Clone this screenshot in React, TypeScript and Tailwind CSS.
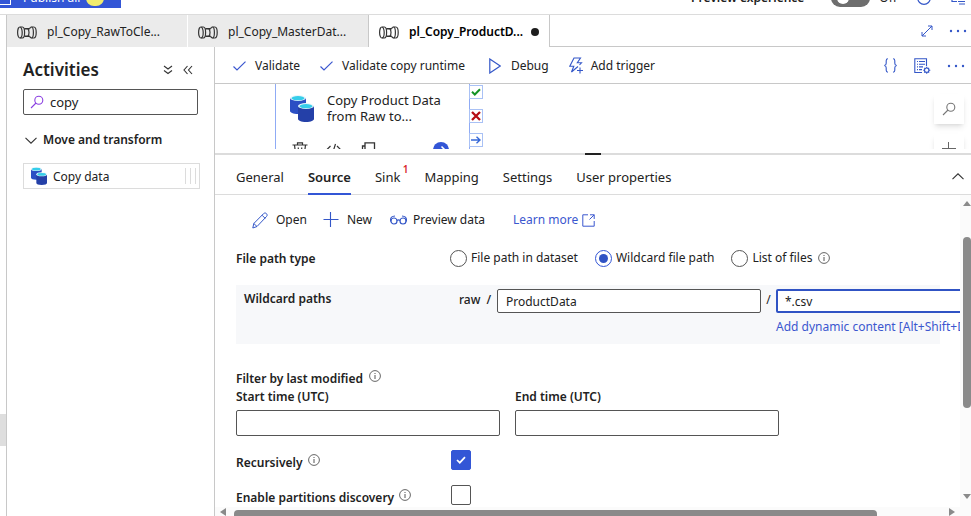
import { useState } from "react";
import type { ReactNode } from "react";

const font = "font-['Noto_Sans','Open_Sans',sans-serif]";

function PipelineIcon() {
  return (
    <svg width="20" height="13" viewBox="0 0 20 13" fill="none" stroke="#333" strokeWidth="1.2" className="shrink-0">
      <ellipse cx="2.900" cy="6.500" rx="2.300" ry="5.500" />
      <path d="M3.200 1h2.200c1.400 0 2.200 2.500 2.200 5.500S6.800 12 5.400 12H3.200" />
      <path d="M7.300 2.800h5.400M7.300 10.200h5.400" strokeWidth="1.400" />
      <path d="M11 2.800c.7 1 1 2.300 1 3.700s-.3 2.700-1 3.700" />
      <path d="M16.800 1h-2.200c-1.200 0-1.800 1-2 1.800M16.800 12h-2.200c-1.200 0-1.800-1-2-1.800" />
      <path d="M14.400 1c1.300 0 2 2.500 2 5.500s-.7 5.500-2 5.500M16.800 1c1.500 0 2.400 2.500 2.400 5.500S18.300 12 16.800 12" />
    </svg>
  );
}

function CopyDataIcon({ className }: { className: string }) {
  return (
    <svg viewBox="0 0 24 27" className={className}>
      <path d="M0 3v13c0 1.500 3 3 8 3s8-1.500 8-3V3z" fill="#2b4fc4" />
      <ellipse cx="8" cy="3" rx="8" ry="3" fill="#e8f6fb" />
      <ellipse cx="8" cy="3.200" rx="6.500" ry="2.100" fill="#35cdea" />
      <path d="M8 11v13c0 1.500 3 3 8 3s8-1.500 8-3V11z" fill="#2440a8" />
      <ellipse cx="16" cy="11" rx="8" ry="3" fill="#e8f6fb" />
      <ellipse cx="16" cy="11.200" rx="6.500" ry="2.100" fill="#35cdea" />
    </svg>
  );
}

function SearchIcon({ className }: { className: string }) {
  return (
    <svg viewBox="0 0 14 14" fill="none" stroke="currentColor" strokeWidth="1.100" className={className}>
      <circle cx="8.800" cy="5.200" r="4" />
      <path d="M6 8L1 13" />
    </svg>
  );
}

function CheckIcon() {
  return (
    <svg width="13" height="10" viewBox="0 0 13 10" fill="none" stroke="#3b57cf" strokeWidth="1.200">
      <path d="M.5 5.500L4 9 12.500.6" />
    </svg>
  );
}

function InfoIcon() {
  return (
    <svg width="12" height="12" viewBox="0 0 12 12" fill="none" stroke="#555" className="shrink-0">
      <circle cx="6" cy="6" r="5.400" strokeWidth=".9" />
      <path d="M6 5v4M6 3v1" strokeWidth="1" />
    </svg>
  );
}

function Dots() {
  return (
    <svg width="18" height="4" viewBox="0 0 18 4" fill="#3457c8">
      <circle cx="2" cy="2" r="1.200" />
      <circle cx="9" cy="2" r="1.200" />
      <circle cx="16" cy="2" r="1.200" />
    </svg>
  );
}

function TopBar() {
  return (
    <header className="flex h-[15px] shrink-0 items-end justify-between overflow-hidden border-b border-[#dcdcdc] bg-white">
      <button className="mb-[6px] flex h-5 w-[121px] shrink-0 items-center bg-[#3356d6] text-[12px] text-white">
        <span className="h-3.5 w-[11px] border border-l-0 border-white" />
        <span className="ml-3">Publish all</span>
        <span className="ml-1.5 h-4 w-[18px] rounded-full bg-[#f1ec6e]" />
      </button>
      <div className="mb-[6px] flex h-5 shrink-0 items-center pr-1.5 text-[12px] text-[#222]">
        <span className="font-semibold">Preview experience</span>
        <span className="ml-[27px] flex h-[18px] w-[39px] items-center rounded-full bg-[#6e6e6e] pl-1.5">
          <span className="size-3 rounded-full bg-white" />
        </span>
        <span className="ml-[9px]">Off</span>
        <svg width="14" height="14" viewBox="0 0 14 14" fill="none" stroke="#3457c8" className="ml-5">
          <circle cx="7" cy="7" r="6.300" strokeWidth="1.200" />
        </svg>
        <svg width="14" height="14" viewBox="0 0 14 14" fill="none" stroke="#3457c8" className="ml-5">
          <path d="M1 1v9.500h5M7 10.500h7M8 13h6" strokeWidth="1.200" />
        </svg>
      </div>
    </header>
  );
}

function FileTabs() {
  return (
    <div role="tablist" className="flex h-8 shrink-0 text-[12px] text-[#222]">
      <button role="tab" className="flex w-[181px] shrink-0 items-center gap-2.5 border-r border-white bg-[#ebebeb] pt-0.5 pl-2.5">
        <PipelineIcon />
        <span>pl_Copy_RawToCle...</span>
      </button>
      <button role="tab" className="flex w-[181px] shrink-0 items-center gap-2.5 border-r border-[#c8c8c8] bg-[#ebebeb] pt-0.5 pl-2.5">
        <PipelineIcon />
        <span>pl_Copy_MasterDat...</span>
      </button>
      <button role="tab" aria-selected="true" className="flex w-[181px] shrink-0 items-center gap-2.5 border-r border-[#c8c8c8] bg-white pt-0.5 pl-2.5 font-semibold text-black">
        <PipelineIcon />
        <span>pl_Copy_ProductD...</span>
        <span className="-ml-0.5 size-2 rounded-full bg-[#1d1d1d]" />
      </button>
      <div className="flex grow items-center justify-end gap-4 border-b border-[#c8c8c8] pr-1">
        <button aria-label="Expand">
          <svg width="12" height="12" viewBox="0 0 12 12" fill="none" stroke="#3457c8" strokeWidth="1">
            <path d="M1 11L11 1M7 1h4v4M1 7v4h4" />
          </svg>
        </button>
        <button aria-label="More tabs"><Dots /></button>
      </div>
    </div>
  );
}

function Activities() {
  const [query, setQuery] = useState("copy");
  return (
    <aside className="w-[208px] shrink-0 border-r border-[#c8c8c8] pl-4 text-[#222]">
      <div className="mt-3 flex h-[22px] items-center pr-[21px]">
        <h2 className="grow text-[17px] font-semibold">Activities</h2>
        <button aria-label="Collapse all">
          <svg width="10" height="10" viewBox="0 0 10 10" fill="none" stroke="#333" strokeWidth="1.100">
            <path d="M1 1l4 3 4-3M1 5.500l4 3 4-3" />
          </svg>
        </button>
        <button aria-label="Hide panel" className="ml-2.5">
          <svg width="10" height="10" viewBox="0 0 10 10" fill="none" stroke="#333" strokeWidth="1.100">
            <path d="M4.500 1l-3.500 4 3.500 4M9 1L5.500 5 9 9" />
          </svg>
        </button>
      </div>
      <label className="mt-2 mr-4 flex h-[26px] items-center rounded-xs border border-[#555] pl-1.5">
        <SearchIcon className="size-3.5 shrink-0 text-[#8a3fe0]" />
        <input aria-label="Search activities" value={query} onChange={(e) => setQuery(e.target.value)} className="ml-1.5 w-full min-w-0 bg-transparent pt-0.5 text-[13px] outline-none" />
      </label>
      <button className="mt-3.5 flex h-5 items-center gap-1.5 pt-0.5 pl-0.5 text-[12px] font-semibold">
        <svg width="12" height="7" viewBox="0 0 12 7" fill="none" stroke="#333" strokeWidth="1.100">
          <path d="M.5.8L6 6.200 11.500.8" />
        </svg>
        Move and transform
      </button>
      <div className="mt-3.5 mr-3.5 flex h-[26px] items-center border border-[#dcdcdc] px-[7px] text-[12px]">
        <CopyDataIcon className="h-[18px] w-4" />
        <span className="ml-1.5 grow pt-0.5">Copy data</span>
        <span className="-mr-1 flex h-4 w-[11px] justify-between border-x border-[#dcdcdc]">
          <span className="mx-auto w-px bg-[#dcdcdc]" />
        </span>
      </div>
    </aside>
  );
}

function Toolbar() {
  return (
    <div className="flex h-[37px] shrink-0 items-center border-b border-[#c8c8c8] pt-px pl-[18px] text-[12px] text-[#222]">
      <button className="flex shrink-0 items-center gap-[9px]"><CheckIcon />Validate</button>
      <button className="ml-5 flex shrink-0 items-center gap-[9px]"><CheckIcon />Validate copy runtime</button>
      <button className="ml-6 flex shrink-0 items-center gap-2.5">
        <svg width="12" height="16" viewBox="0 0 12 16" fill="none" stroke="#3457c8" strokeWidth="1.200">
          <path d="M.8 1l10.500 7L.8 15z" />
        </svg>
        Debug
      </button>
      <button className="ml-5 flex shrink-0 items-center gap-2">
        <svg width="14" height="17" viewBox="0 0 14 17" fill="none" stroke="#3457c8" strokeWidth="1.100">
          <path d="M9 9.500L2.500 15l2.300-5.800H.8L5 1h6.500L8.300 5.800h4.200L10.500 8" />
          <path d="M11 10.500v6M8 13.500h6" />
        </svg>
        Add trigger
      </button>
      <div className="flex grow items-center justify-end gap-4 pr-1.5">
        <button aria-label="Code">
          <svg width="15" height="15" viewBox="0 0 14 15" fill="none" stroke="#3457c8" strokeWidth="1.100">
            <path d="M4.500.8C3 .8 2.700 1.500 2.700 2.700v2.500c0 1.300-.4 2-1.900 2.300 1.500.3 1.900 1 1.900 2.300v2.500c0 1.200.3 1.900 1.800 1.900M9.500.8c1.500 0 1.800.7 1.800 1.900v2.500c0 1.300.4 2 1.900 2.300-1.500.3-1.900 1-1.900 2.300v2.500c0 1.200-.3 1.900-1.800 1.900" />
          </svg>
        </button>
        <button aria-label="Properties">
          <svg width="17" height="16" viewBox="0 0 17 16" fill="none" stroke="#3457c8" strokeWidth="1.100">
            <path d="M12.500 8V.8H.8v13.700H8M3 3.500h1M5 3.500h6M3 6.200h1M5 6.200h6M3 8.900h1M5 8.900h4M3 11.600h1M5 11.600h3" />
            <circle cx="12.700" cy="12.200" r="2.200" />
            <path d="M12.700 8.700v1.300M12.700 14.400v1.300M9.200 12.200h1.300M15 12.200h1.300M10.300 9.800l.9.900M14.200 13.700l.9.900M10.300 14.600l.9-.9M14.200 10.700l.9-.9" />
          </svg>
        </button>
        <button aria-label="More actions"><Dots /></button>
      </div>
    </div>
  );
}

function Port({ children, top, label }: { children: ReactNode; top: string; label: string }) {
  return (
    <button aria-label={label} className={`absolute left-[193px] flex size-3.5 items-center justify-center border border-[#a9c1f5] bg-white ${top}`}>
      {children}
    </button>
  );
}

function Canvas() {
  return (
    <div className="relative h-[65px] shrink-0 overflow-hidden bg-white">
      <div className="absolute top-0 left-[60px] h-24 w-[195px] border-x border-[#8fabf5] text-[#222]">
        <CopyDataIcon className="absolute top-[11px] left-3.5 h-[27px] w-6" />
        <p className="absolute top-2 left-[51px] w-[130px] text-[13px] leading-4">Copy Product Data from Raw to...</p>
        <div className="absolute top-[58px] left-4 flex w-[157px] items-start">
          <svg width="16" height="16" viewBox="0 0 16 16" fill="none" stroke="#333" strokeWidth="1.200">
            <path d="M.5 3h15M5.500 3V.8h5V3M2.500 3L4 15h8l1.500-12M6.300 5.500v7M9.700 5.500v7" />
          </svg>
          <svg width="16" height="16" viewBox="0 0 16 16" fill="none" stroke="#333" strokeWidth="1.200" className="ml-[18px]">
            <path d="M4.500 4L1 7.500 4.500 11M9.500 2L6 13M11 4l3.500 3.500L11 11" />
          </svg>
          <svg width="16" height="16" viewBox="0 0 16 16" fill="none" stroke="#333" strokeWidth="1.300" className="ml-[19px]">
            <path d="M4 11V.8h9.500V11zM4 4H1.500v10H10v-3" />
          </svg>
          <svg width="16" height="16" viewBox="0 0 16 16" className="ml-auto">
            <circle cx="8" cy="8" r="8" fill="#3356d6" />
            <path d="M3.500 8h8.500M8.500 4.500L12 8l-3.500 3.500" fill="none" stroke="#fff" strokeWidth="1.500" />
          </svg>
        </div>
        <Port top="top-px" label="On success">
          <svg width="10" height="8" viewBox="0 0 10 8" fill="none" stroke="#159325" strokeWidth="2" className="shrink-0"><path d="M1 3.800l2.800 2.700L9 1.200" /></svg>
        </Port>
        <Port top="top-[25px]" label="On failure">
          <svg width="10" height="10" viewBox="0 0 10 10" fill="none" stroke="#b60d12" strokeWidth="2.300" className="shrink-0"><path d="M1 1l8 8M9 1L1 9" /></svg>
        </Port>
        <Port top="top-[49px]" label="On completion">
          <svg width="10" height="8" viewBox="0 0 10 8" fill="none" stroke="#3668d8" strokeWidth="1.400" className="shrink-0"><path d="M0 4h9M5.500.8L9 4 5.500 7.200" /></svg>
        </Port>
      </div>
      <button aria-label="Search canvas" className="absolute top-[10px] right-[7px] flex size-[30px] items-center justify-center bg-white text-[#777] shadow-md">
        <SearchIcon className="size-3.5" />
      </button>
      <button aria-label="Zoom in" className="absolute top-[50px] right-[7px] flex size-[30px] items-center justify-center bg-white shadow-md">
        <svg width="14" height="14" viewBox="0 0 14 14" stroke="#666" strokeWidth="1"><path d="M0 6.500h14M6.500 0v14" /></svg>
      </button>
    </div>
  );
}

function PropertyTabs() {
  return (
    <div role="tablist" className="flex h-10 shrink-0 items-stretch gap-6 border-b border-[#dcdcdc] pr-[7px] pl-[21px] text-[13px] text-[#222]">
      <button role="tab" className="pt-2.5 pb-1">General</button>
      <button role="tab" aria-selected="true" className="-mb-px border-b-2 border-[#3356d6] pt-2.5 pb-[3px] font-semibold">Source</button>
      <button role="tab" className="relative pt-2.5 pb-1">
        Sink
        <span className="absolute top-1.5 -right-2 text-[10px] leading-4 font-semibold text-[#d9262c]">1</span>
      </button>
      <button role="tab" className="pt-2.5 pb-1">Mapping</button>
      <button role="tab" className="pt-2.5 pb-1">Settings</button>
      <button role="tab" className="pt-2.5 pb-1">User properties</button>
      <button aria-label="Collapse properties" className="ml-auto pt-1">
        <svg width="12" height="7" viewBox="0 0 12 7" fill="none" stroke="#333" strokeWidth="1.100"><path d="M.5 6.200L6 .8l5.500 5.400" /></svg>
      </button>
    </div>
  );
}

function PathRadio({ label, value, selected, onSelect }: { label: string; value: string; selected: string; onSelect: (v: string) => void }) {
  return (
    <label className="flex shrink-0 items-center gap-1">
      <input
        type="radio"
        name="pathType"
        checked={selected === value}
        onChange={() => onSelect(value)}
        className="flex size-[17px] appearance-none items-center justify-center rounded-full border border-[#555] bg-white before:size-[9px] before:rounded-full checked:border-[#3356d6] checked:before:bg-[#3053c4]"
      />
      {label}
    </label>
  );
}

function CheckRow({ id, label, initial }: { id: string; label: string; initial: boolean }) {
  const [on, setOn] = useState(initial);
  return (
    <div className="flex h-5 items-center">
      <div className="flex w-[215px] shrink-0 items-center gap-[5px]">
        <label htmlFor={id} className="pt-1.5 font-semibold">{label}</label>
        <InfoIcon />
      </div>
      <span className="relative flex size-5">
        <input id={id} type="checkbox" checked={on} onChange={() => setOn(!on)} className="size-5 appearance-none rounded-xs border border-[#555] bg-white checked:border-[#3356d6] checked:bg-[#3356d6]" />
        {on && (
          <svg width="10" height="8" viewBox="0 0 10 8" fill="none" stroke="#fff" strokeWidth="1.700" className="pointer-events-none absolute top-1.5 left-[5px]">
            <path d="M1 4l2.800 2.700L9 1.200" />
          </svg>
        )}
      </span>
    </div>
  );
}

function SourceForm() {
  const [pathType, setPathType] = useState("wildcard");
  const [folder, setFolder] = useState("ProductData");
  const [file, setFile] = useState("*.csv");
  return (
    <div className="min-w-0 grow overflow-hidden pl-[21px] text-[12px] text-[#222]">
      <div className="mt-[15px] flex h-5 items-center pl-4">
        <button className="flex shrink-0 items-center gap-2">
          <svg width="16" height="17" viewBox="0 0 16 17" fill="none" stroke="#3457c8" strokeWidth="1">
            <path d="M.8 16l1-4.500L11.500 1.700c1-1 2.200-.9 3 0s.9 1.900 0 2.800L5 14.500zM10 3.200l3.200 3.200M1.800 11.500L5 14.500" />
          </svg>
          Open
        </button>
        <button className="ml-4 flex shrink-0 items-center gap-2">
          <svg width="16" height="16" viewBox="0 0 16 16" stroke="#3457c8" strokeWidth="1.100"><path d="M.5 7.500h15M7.500 0v15" /></svg>
          New
        </button>
        <button className="ml-[18px] flex shrink-0 items-center gap-1.5">
          <svg width="17" height="10" viewBox="0 0 17 10" fill="none" stroke="#3457c8" strokeWidth="1.200">
            <circle cx="4" cy="6" r="3" /><circle cx="13" cy="6" r="3" />
            <path d="M7 5.500c1-.8 2-.8 3 0M.6 6.500V4.500C.6 2.500 2 1.200 5 1M16.400 6.500V4.500C16.400 2.500 15 1.200 12 1" />
          </svg>
          Preview data
        </button>
        <a href="#learn" className="ml-7 flex shrink-0 items-center gap-1 text-[#3b57cf]">
          Learn more
          <svg width="13" height="13" viewBox="0 0 13 13" fill="none" stroke="currentColor" strokeWidth="1"><path d="M6 .8H.8v11.400h11.400V7M8 .8h4.200V5M12.200.8L7.500 5.500" /></svg>
        </a>
      </div>

      <div role="radiogroup" aria-labelledby="path-type" className="mt-[18px] flex h-5 items-center">
        <span id="path-type" className="w-[214px] shrink-0 pt-0.5 font-semibold">File path type</span>
        <div className="flex items-center gap-[17px]">
          <PathRadio label="File path in dataset" value="dataset" selected={pathType} onSelect={setPathType} />
          <PathRadio label="Wildcard file path" value="wildcard" selected={pathType} onSelect={setPathType} />
          <div className="flex items-center gap-1.5">
            <PathRadio label="List of files" value="list" selected={pathType} onSelect={setPathType} />
            <InfoIcon />
          </div>
        </div>
      </div>

      <div className="mt-[17px] mr-5 flex h-[59px] items-start bg-[#f7f8fa] pt-1 pl-2">
        <span className="w-[215px] shrink-0 pt-px font-semibold">Wildcard paths</span>
        <span className="w-[38px] shrink-0 pt-0.5 font-medium">raw&nbsp; /</span>
        <input aria-label="Wildcard folder path" value={folder} onChange={(e) => setFolder(e.target.value)} className="h-6 w-[264px] shrink-0 rounded-xs border border-[#555] bg-white px-2" />
        <span className="w-[15px] shrink-0 pt-0.5 text-center">/</span>
        <div className="w-[264px] shrink-0">
          <input aria-label="Wildcard file name" value={file} onChange={(e) => setFile(e.target.value)} className="block h-6 w-full rounded-xs border-2 border-[#3053c4] bg-white px-[7px]" />
          <a href="#dynamic" className="mt-[5px] block whitespace-nowrap text-[#3b57cf]">Add dynamic content [Alt+Shift+D]</a>
        </div>
      </div>

      <div className="mt-[26px] flex h-[18px] items-start gap-1.5">
        <span className="font-semibold">Filter by last modified</span>
        <InfoIcon />
      </div>
      <div className="flex gap-[15px]">
        <label className="w-[264px] shrink-0 leading-[18px] font-semibold">
          Start time (UTC)
          <input className="mt-1 block h-[26px] w-full rounded-xs border border-[#555] bg-white px-2" />
        </label>
        <label className="w-[264px] shrink-0 leading-[18px] font-semibold">
          End time (UTC)
          <input className="mt-1 block h-[26px] w-full rounded-xs border border-[#555] bg-white px-2" />
        </label>
      </div>
      <div className="mt-3.5 flex flex-col gap-[15px]">
        <CheckRow id="recursive" label="Recursively" initial={true} />
        <CheckRow id="partitions" label="Enable partitions discovery" initial={false} />
      </div>
    </div>
  );
}

function Arrow({ d }: { d: string }) {
  return <svg width="8" height="8" viewBox="0 0 8 8" fill="#8a8a8a" className="shrink-0"><path d={d} /></svg>;
}

export default function App() {
  return (
    <div className={`flex h-screen flex-col overflow-hidden bg-white ${font}`}>
      <TopBar />
      <div className="flex min-h-0 grow">
        <div className="flex w-[7px] shrink-0 flex-col border-r border-[#c8c8c8] pb-[70px]">
          <span className="mt-auto h-8 bg-[#dedede]" />
        </div>
        <div className="flex min-w-0 grow flex-col">
          <FileTabs />
          <div className="flex min-h-0 grow">
            <Activities />
            <main className="flex min-w-0 grow flex-col">
              <Toolbar />
              <Canvas />
              <div className="mt-1 flex h-0.5 shrink-0 justify-center bg-[#dcdcdc]">
                <span className="w-4 bg-[#222]" />
              </div>
              <PropertyTabs />
              <div className="flex min-h-0 grow">
                <SourceForm />
                <div className="flex w-[11px] shrink-0 flex-col items-end bg-[#fbfbfb] pt-1 pb-1.5">
                  <Arrow d="M0 7l4-5 4 5z" />
                  <div className="flex w-2 grow flex-col py-[30px]">
                    <span className="h-[171px] rounded-full bg-[#8a8a8a]" />
                  </div>
                  <Arrow d="M0 1l4 5 4-5z" />
                </div>
              </div>
              <div className="flex h-[9px] shrink-0 items-end overflow-hidden bg-[#fbfbfb] pr-[15px] pl-1">
                <Arrow d="M7 0v8L1 4z" />
                <div className="flex h-1.5 grow pl-[7px]">
                  <span className="w-[90%] rounded-t bg-[#8a8a8a]" />
                </div>
                <Arrow d="M1 0v8l6-4z" />
              </div>
            </main>
          </div>
        </div>
      </div>
    </div>
  );
}
